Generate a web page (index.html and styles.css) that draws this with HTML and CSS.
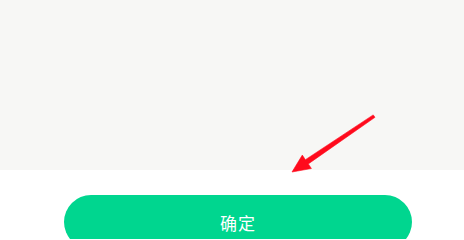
FILE: index.html
```html
<!DOCTYPE html>
<html lang="zh">
<head>
<meta charset="utf-8">
<link rel="stylesheet" href="styles.css">
</head>
<body>
<div class="page">
  <div class="top"></div>
  <div class="bottom">
    <button class="confirm">确定</button>
  </div>
  <svg class="arrow" width="464" height="239" viewBox="0 0 464 239">
    <polygon fill="#ff0a1c" stroke="#ff0a1c" stroke-width="0.6" stroke-linejoin="round" points="373.2,114.9 305.4,159.7 302.3,155.1 292,172 311.4,168.5 308.3,163.9 375.0,117.3"/>
  </svg>
</div>
</body>
</html>
```
FILE: styles.css
```css
html, body {
  margin: 0;
  padding: 0;
  background: #ffffff;
  overflow: hidden;
}
.page {
  position: relative;
  width: 464px;
  height: 239px;
  overflow: hidden;
  font-family: "Noto Sans CJK SC", "Noto Sans", sans-serif;
}
.top {
  height: 170px;
  background: #f7f7f5;
}
.bottom {
  padding: 25px 0 0 64px;
  display: flex;
}
.confirm {
  width: 348px;
  height: 54px;
  border: none;
  border-radius: 27px;
  background: #00d68f;
  color: #ffffff;
  font-family: "Noto Sans CJK SC", "Noto Sans", sans-serif;
  font-size: 17px;
  letter-spacing: 1px;
  padding: 0;
}
.arrow {
  position: absolute;
  left: 0;
  top: 0;
  pointer-events: none;
}
```
